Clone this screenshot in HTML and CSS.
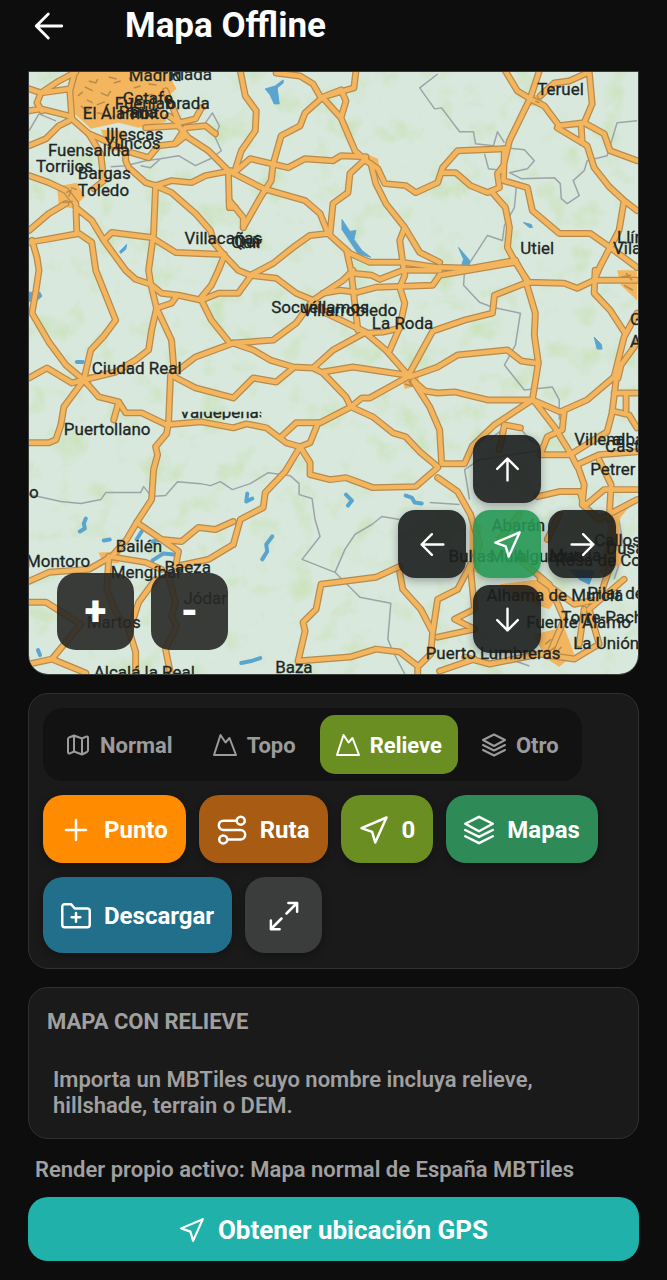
FILE: index.html
```html
<!DOCTYPE html>
<html lang="es">
<head>
<meta charset="utf-8">
<meta name="viewport" content="width=device-width, initial-scale=1">
<title>Mapa Offline</title>
<link rel="stylesheet" href="styles.css">
</head>
<body>
<svg class="sprite" aria-hidden="true">
  <symbol id="i-nav" viewBox="0 0 24 24"><path d="M22 2 2 10.500l8.500 3L13 22z"/></symbol>
  <symbol id="i-arrow" viewBox="0 0 24 24"><path d="M21 12H3M11.500 3.500 3 12l8.500 8.500"/></symbol>
  <symbol id="i-map" viewBox="0 0 24 24"><path d="M2 6a2 2 0 0 1 1-1.500L8 2.500l8 3 4-1.800q2-.7 2 1.300v12.500a2 2 0 0 1-1 1.500l-5 2.500-8-3-4 1.800q-2 .7-2-1.300zM8 2.500v16M16 5.500v16"/></symbol>
  <symbol id="i-peak" viewBox="0 0 24 24"><path d="M1 22 7.500 2l5 7.500L16.500 5 23 22z"/></symbol>
  <symbol id="i-layers" viewBox="0 0 24 24"><path d="M12 1.500 23 7l-11 6L1 7zM1 12l11 5.500L23 12M1 17l11 5.500L23 17"/></symbol>
  <symbol id="i-plus" viewBox="0 0 24 24"><path d="M12 4v16M4 12h16"/></symbol>
  <symbol id="i-route" viewBox="0 0 24 24"><circle cx="19" cy="4.500" r="3.200"/><circle cx="5" cy="19.500" r="3.200"/><path d="M15.800 4.500H5.200a3.700 3.700 0 0 0 0 7.500h13.600a3.700 3.700 0 0 1 0 7.500H8.200"/></symbol>
  <symbol id="i-folder" viewBox="0 0 24 24"><path d="M1 4.500a2 2 0 0 1 2-2h5l3 3.500h10a2 2 0 0 1 2 2v11a2 2 0 0 1-2 2H3a2 2 0 0 1-2-2zM12 9.500v7M8.500 13h7"/></symbol>
  <symbol id="i-expand" viewBox="0 0 24 24"><path d="M14 10 22 2M15.500 1.500h7v7M10 14l-8 8M1.500 15.500v7h7"/></symbol>
</svg>

<header class="topbar">
  <button class="back" type="button" aria-label="Volver"><svg class="icon"><use href="#i-arrow"/></svg></button>
  <h1 class="title">Mapa Offline</h1>
</header>

<main class="content">
  <section class="map" aria-label="Mapa">
    <svg class="map-canvas" viewBox="28 71 611 604" preserveAspectRatio="xMidYMid slice">
      <defs>
        <filter id="woods" x="0" y="0" width="100%" height="100%" color-interpolation-filters="sRGB">
          <feTurbulence type="fractalNoise" baseFrequency="0.035" numOctaves="4" seed="8"/>
          <feColorMatrix values="0 0 0 0 .80  0 0 0 0 .89  0 0 0 0 .74  3 0 0 0 -1.600"/>
        </filter>
        <clipPath id="tile"><rect x="170" y="412" width="91" height="8"/></clipPath>
        <clipPath id="tile-left"><rect x="230" y="225" width="32" height="30"/></clipPath>
        <g id="roads">
          <path d="M28 88 40 92 68 88M40 92 36 102 41 110M28 110 40 108 68 115M40 92 58 80 75 71M28 145 45 138 58 125 68 120M74 71 69 90 71 118 88 133 100 153 103 180 93 188"/>
          <path d="M125 150V160L128 167 145 182 155 185 171 180 191 182 205 175 231 170M145 127 178 125 188 137 208 150 228 170 229 207H235M201 107 195 118 178 122 168 115M175 142 185 127 205 125 215 133M131 152 148 157 158 145 175 143 185 135M88 133 100 138 125 150M165 90 178 120"/>
          <path d="M155 185 153 233 148 270 150 283 156 308 151 330 148 350 135 360 115 372 83 380M155 185 171 192 195 213 210 230 214 243 224 255 238 270 250 275"/>
          <path d="M28 175 48 182 65 190 75 203 76 233M65 203 48 213 28 230M75 207 91 220 103 240 125 270 135 279 150 284M28 242 78 233 91 242 95 270 103 290 115 320 103 336 90 350 83 380M103 240 111 232 151 237 175 252 224 254M31 240 36 257 38 270 35 290 31 313 48 342 65 365 83 380"/>
          <path d="M28 378 46 368 71 383 83 380 63 407 60 425 55 440 48 443H28M83 380 98 397 118 402 125 413H141L166 425M118 402 113 420M170 375 168 423 166 434 155 447 157 455 153 470 151 500 136 523 126 540 111 557 88 570 48 573 28 582"/>
          <path d="M156 308 171 340 174 377 195 388 233 398 253 378 276 382 293 368M150 284 161 293 178 295 201 300 218 293H238L251 275 276 278 296 293 313 300M176 296 171 303 156 308M201 297 211 285 218 270 224 255M201 300 211 320 228 341M174 373 195 357 233 343M166 425 201 422 233 428 246 424 266 428 286 443 300 447 310 463V475L330 480 346 478 373 488 416 487 438 468"/>
          <path d="M136 523 161 540 181 542 198 528 215 530 233 522M161 540 178 552 175 567 208 560 233 545M108 557 145 563 161 570M108 560 106 590 115 613 128 630 135 653V675M155 580 138 603 131 625M168 577 175 603 171 617 176 627 165 650 170 675M28 603H45L80 625 51 660 28 665M51 660 85 674"/>
          <path d="M240 70 245 95 256 110 255 130 241 150 234 172 250 158 288 167 305 158 333 160 341 155 366 156M276 72 300 75 313 83 321 97M356 70 354 87 323 96 305 112 300 125 281 135 273 163 271 180 260 197 243 227M323 97 341 117 355 150 366 160 378 168 385 183 406 185 416 192 438 182 443 167 458 150 505 148M323 96 341 89 346 100 341 117"/>
          <path d="M228 170 263 188 305 200 320 213 328 233 350 253 370 262H403L438 267 471 268 516 260M366 158 350 173 348 192 333 203 330 233M328 233 310 235 293 247 273 263 250 275M371 163 376 183 386 203 405 227 400 240 403 262 405 275 400 287 405 303 400 327 390 350M405 227 420 252 440 262M347 252 351 270 358 330M229 200 243 217V227"/>
          <path d="M506 70 518 90 531 98M540 70 531 97 510 140 504 165 498 173 500 187 488 192 471 185 456 172H443M505 148 504 180 528 187 533 210 560 233H591L611 247 638 267M493 192 506 207 510 227 508 247 516 262 528 280M531 98 545 105 560 125 585 122 593 103 590 70M541 95 555 82 570 80 588 72M558 127 588 145 595 167 610 186 625 200 638 210M582 125 583 142M585 122 605 133 611 150 638 160M625 200 620 230 611 247 601 266 595 280"/>
          <path d="M353 270 343 280 313 300 296 323 273 340 233 343 253 350 270 360 293 367 313 368 333 350 366 332 326 313 313 300M313 368 323 373 346 397 351 407 320 423H296L281 437M323 372 353 367 406 375M351 407 362 398 370 398 406 378M351 407 373 417 393 433 406 437 420 452 438 467M410 377 386 350 366 333 383 332 400 328M410 373 433 331 465 320 493 313 495 295 528 282M410 377 438 367 458 355 508 350 522 361 536 363M414 381 425 391 438 393 455 392 488 400H531M414 382 430 407 440 430 442 464 465 464 473 446 495 425 533 400"/>
          <path d="M353 273 372 275 380 279 403 270H440M323 293 340 290 357 292 376 287 433 285 440 275 516 262M318 423 310 443 300 447 285 472 265 493 263 508 240 520 233 545"/>
          <path d="M516 260 528 282 565 283 578 288 595 280H638M527 283 536 313 535 335 539 363 533 400 561 412 588 400 615 377 625 337 638 313M596 270 595 293 611 310 626 333M619 378 622 365 638 343M534 400 555 427 571 453 578 467M565 411 563 430 548 437 541 455H571L608 432 613 413 617 380M615 393H638M627 396V410M613 411 630 415 638 428M578 465 600 455 638 452"/>
          <path d="M400 567 376 578 321 585 316 610 303 623 305 632 298 662 350 658 376 650 400 653 418 667V675M400 573 403 590 421 610 433 633 431 655 418 668M433 633 438 600 458 590 471 565M438 478 458 492 471 515 480 545 471 570 475 610 455 620 475 630 438 638M538 497 560 492 581 492 585 507 605 490H638M578 465 585 485 583 505 600 520 638 500M600 460 612 485 610 520M520 515 500 540M520 560 550 585 565 620 550 655M541 580 575 605 600 600 610 570M465 658 490 665 540 655 575 660 600 645 590 610 625 580M440 672 475 660M585 610 580 645M500 450 505 425 521 428M560 515 548 540"/>
        </g>
      </defs>
      <rect class="land" x="28" y="71" width="611" height="604"/>
      <rect x="28" y="71" width="611" height="604" filter="url(#woods)"/>
      <path class="limit" d="M28 130 38 113 55 120M110 166 125 165 145 160 160 158 178 155 195 165 210 158 221 150 215 137 219 125 212 112 205 122M140 165 150 167 160 158M438 73 420 87 435 108 442 107 460 131 474 131 476 143 494 145 498 131 505 142M485 153 489 168 505 170M505 147 525 149 535 160 528 168 510 172 522 178 555 177 561 183 562 198 568 203 580 195 574 180 585 170 588 160 608 155 618 122 638 120M517 185 515 207 505 225 503 240 488 235 475 255 465 270 464 285 480 302 493 307 521 313 516 345 505 365 525 390 553 387 560 400V420M28 495 60 502 80 504 100 500 105 493 140 493 143 487 151 497 165 496 177 482 200 484 210 486 220 482 232 490 250 484 268 473 290 476 299 484V495L312 499 315 520 320 537 302 560 335 573 345 550 355 535 372 525 382 517 400 520M335 573 360 598 391 604 388 640 392 650 405 675M490 440 505 428 520 427 530 440 545 448M470 500 465 470 480 460 545 450M430 503 460 505M618 510 625 550 615 580M510 660 530 667"/>
      <path class="water" d="M265 88 275 85 283 79 283 82 277 87 279 103 274 103 270 94ZM342 219 350 231 356 230 354 239 362 250 371 257 358 253 350 241 342 229ZM459 247 470 260 470 264 462 265 464 259ZM524 222 532 224 533 227 530 227ZM595 337 602 344 603 349 598 349ZM119 251 126 244 125 249 120 253ZM28 292 39 292 41 296 35 301H28ZM570 570 595 572 590 585 580 580Z"/>
      <path class="stream" d="M76 362H82M85 519 83 524 84 529 79 532M103 541 109 540M136 540 141 532M152 542 160 540 169 544M152 561 163 554 173 555M247 494 246 502 252 499M346 495 352 501 348 506M406 496 412 498 415 503 422 504M272 537 266 545 267 552 262 560M241 664 251 662 260 659M37 651 39 656"/>
      <path class="town-area" d="M76 71H167L176 88 161 100 166 121 138 127 118 122 90 128 74 113 70 90ZM100 129 125 130 122 150 108 150ZM56 186 76 182 84 196 72 208 58 205ZM525 92 542 95 544 104 528 105ZM366 153 378 158 380 169 366 162ZM400 371 418 373 420 385 405 389ZM76 374 92 374 90 386 78 387ZM618 270H638V300L622 285ZM636 500 620 520 622 565 600 575 610 520ZM535 635 565 628 575 655 560 668 545 658ZM500 585 540 580 560 595 550 610 520 600ZM470 525 482 525 480 575 470 570ZM98 553 120 552 118 564 102 564Z"/>
      <use class="road-edge" href="#roads"/>
      <use class="road-core" href="#roads"/>
      <path class="streets" d="M88 80 95 82 97 78M84 86 92 90M100 92 107 95 110 90M113 82 120 80M108 76 116 78M125 95 118 99M86 99 92 102M133 87 140 85M128 77 133 81M146 95 152 93M148 83 156 84M77 95 82 91M80 105 86 110 90 107M96 112 102 113M150 108 156 105M96 104 104 101M108 118 114 115M65 192 70 190 68 196M62 202 72 201M70 187 76 189M405 384 412 386 409 381M622 277 632 275M625 285 634 290M627 273 633 280M546 645 552 640M556 655 562 648M550 652 556 648M536 100 540 102"/>
      <g class="places">
        <text x="128" y="80">Madrid</text><text x="169" y="79">Rlada</text>
        <text x="122" y="103">Getafe</text><text x="114" y="108">Fuenlab</text><text x="166" y="108">orada</text>
        <text x="82" y="118">El Álamo</text><text x="118" y="117">Parla</text><text x="129" y="118">Pinto</text>
        <text x="105" y="139">Illescas</text><text x="104" y="148">Yuncos</text>
        <text x="47" y="155">Fuensalida</text><text x="35" y="171">Torrijos</text><text x="77" y="178">Bargas</text><text x="77" y="195">Toledo</text>
        <text x="184" y="244">Villacañas</text>
        <g clip-path="url(#tile-left)"><text x="231" y="248">Quintanar</text><text x="234" y="247">Qui</text></g>
        <text x="538" y="94">Teruel</text><text x="521" y="254">Utiel</text>
        <text x="618" y="243">Llíria</text><text x="614" y="254">Vilamarxant</text>
        <text x="271" y="313">Socuéllamos</text><text x="302" y="316">Villarrobledo</text><text x="372" y="329">La Roda</text>
        <text x="631" y="325">Gandia</text><text x="631" y="347">Alcoi</text>
        <text x="91" y="374">Ciudad Real</text><text x="63" y="435">Puertollano</text>
        <text x="179" y="418" clip-path="url(#tile)">Valdepeñas</text>
        <text x="575" y="445">Villena</text><text x="613" y="445">alba</text><text x="606" y="452">Castalla</text><text x="591" y="475">Petrer</text>
        <text x="28" y="498">o</text><text x="115" y="553">Bailén</text><text x="25" y="568">Montoro</text><text x="110" y="579">Mengíbar</text><text x="164" y="574">Baeza</text>
        <text x="183" y="605">Jódar</text><text x="86" y="629">Martos</text><text x="93" y="679">Alcalá la Real</text><text x="275" y="674">Baza</text>
        <text x="492" y="532">Abarán</text><text x="449" y="563">Bullas</text><text x="490" y="563">Mula</text><text x="515" y="563">Alguazas</text><text x="550" y="562">Murcia</text>
        <text x="595" y="547">Callosa de</text><text x="607" y="555">Dusa</text><text x="556" y="567">Rosa de Co</text>
        <text x="487" y="602">Alhama de Murcia</text><text x="588" y="600">Pilar de la</text><text x="562" y="624">Torre-Pacheco</text><text x="527" y="629">Fuente Álamo</text><text x="574" y="650">La Unión</text><text x="426" y="660">Puerto Lumbreras</text>
      </g>
    </svg>
    <div class="zoom">
      <button type="button" aria-label="Acercar">+</button>
      <button type="button" aria-label="Alejar">-</button>
    </div>
    <div class="pad">
      <button class="up" type="button" aria-label="Arriba"><svg class="icon"><use href="#i-arrow"/></svg></button>
      <button class="left" type="button" aria-label="Izquierda"><svg class="icon"><use href="#i-arrow"/></svg></button>
      <button class="center" type="button" aria-label="Centrar"><svg class="icon"><use href="#i-nav"/></svg></button>
      <button class="right" type="button" aria-label="Derecha"><svg class="icon"><use href="#i-arrow"/></svg></button>
      <button class="down" type="button" aria-label="Abajo"><svg class="icon"><use href="#i-arrow"/></svg></button>
    </div>
  </section>

  <section class="card controls">
    <div class="tabs">
      <button class="tab" type="button"><svg class="icon"><use href="#i-map"/></svg>Normal</button>
      <button class="tab" type="button"><svg class="icon"><use href="#i-peak"/></svg>Topo</button>
      <button class="tab active" type="button" aria-pressed="true"><svg class="icon"><use href="#i-peak"/></svg>Relieve</button>
      <button class="tab" type="button"><svg class="icon"><use href="#i-layers"/></svg>Otro</button>
    </div>
    <div class="actions">
      <button class="action point" type="button"><svg class="icon"><use href="#i-plus"/></svg>Punto</button>
      <button class="action route" type="button"><svg class="icon"><use href="#i-route"/></svg>Ruta</button>
      <button class="action count" type="button"><svg class="icon"><use href="#i-nav"/></svg>0</button>
      <button class="action maps" type="button"><svg class="icon"><use href="#i-layers"/></svg>Mapas</button>
      <button class="action download" type="button"><svg class="icon"><use href="#i-folder"/></svg>Descargar</button>
      <button class="action expand" type="button" aria-label="Pantalla completa"><svg class="icon"><use href="#i-expand"/></svg></button>
    </div>
  </section>

  <section class="card info">
    <h2>MAPA CON RELIEVE</h2>
    <p>Importa un MBTiles cuyo nombre incluya relieve, hillshade, terrain o DEM.</p>
  </section>

  <p class="status">Render propio activo: Mapa normal de España MBTiles</p>
  <button class="gps" type="button"><svg class="icon"><use href="#i-nav"/></svg>Obtener ubicación GPS</button>
</main>
</body>
</html>
```
FILE: styles.css
```css
* { box-sizing: border-box; }
body { margin: 0; background: #0d0d0d; color: #fff; font-family: Roboto, sans-serif; }
h1, h2, p { margin: 0; }
button { font: inherit; color: inherit; border: 0; padding: 0; background: none; display: flex; align-items: center; justify-content: center; }
.sprite { position: absolute; width: 0; height: 0; }
.icon { width: 30px; height: 30px; flex: none; fill: none; stroke: currentColor; stroke-width: 2; stroke-linecap: round; stroke-linejoin: round; overflow: visible; }

.topbar { display: flex; align-items: center; gap: 59px; height: 71px; padding: 4px 32px 23px; }
.back .icon { width: 34px; height: 34px; }
.title { font-size: 35px; line-height: 40px; font-weight: 700; }

.content { display: flex; flex-direction: column; padding: 0 28px 19px; }

.map { position: relative; aspect-ratio: 611 / 604; overflow: hidden; border: 1px solid #3a3d3c; border-radius: 0 0 20px 20px; }
.map-canvas { display: block; width: 100%; height: 100%; }
.land { fill: #d8e8dd; }
.water { fill: #5aa5d0; stroke: #5aa5d0; stroke-width: 1; stroke-linejoin: round; }
.stream { fill: none; stroke: #5aa5d0; stroke-width: 4; stroke-linejoin: round; stroke-linecap: round; }
.limit { fill: none; stroke: #9da4a8; stroke-width: 1.500; stroke-linejoin: round; }
.town-area { fill: #f3b65f; }
.road-edge, .road-core { fill: none; stroke-linecap: round; stroke-linejoin: round; }
.road-edge { stroke: #b88a4c; stroke-width: 7; }
.road-core { stroke: #f3b65f; stroke-width: 4.500; }
.streets { fill: none; stroke: #b88a4c; stroke-width: 1.500; }
.places { fill: #202625; font-size: 17px; stroke: #202625; stroke-width: .3; }

.zoom { position: absolute; left: 28px; bottom: 24px; display: flex; gap: 17px; }
.zoom button { width: 77px; height: 77px; border-radius: 19px; background: rgba(40, 40, 39, .9); font-size: 40px; line-height: 48px; font-weight: 900; }
.pad { position: absolute; right: 22px; bottom: 21px; display: grid; grid-template: repeat(3, 68px) / repeat(3, 68px); gap: 7px; }
.pad button { border-radius: 17px; background: rgba(28, 30, 29, .9); box-shadow: 0 3px 8px rgba(0, 0, 0, .3); }
.pad .icon { width: 29px; height: 29px; }
.pad .up { grid-area: 1 / 2; }
.pad .left { grid-area: 2 / 1; }
.pad .center { grid-area: 2 / 2; background: rgba(37, 151, 83, .9); }
.pad .right { grid-area: 2 / 3; }
.pad .down { grid-area: 3 / 2; }
.up .icon { transform: rotate(90deg); }
.right .icon { transform: rotate(180deg); }
.down .icon { transform: rotate(270deg); }

.card { margin-top: 18px; border: 1px solid #303030; border-radius: 20px; background: #1a1a1a; }
.controls { padding: 14px 14px 15px; }
.tabs { display: flex; gap: 8px; width: fit-content; padding: 7px; border-radius: 20px; background: #121212; }
.tab { gap: 10px; height: 59px; padding: 1px 16px 0; border-radius: 15px; color: #9b9b9b; font-size: 22px; font-weight: 700; }
.tab .icon { width: 24px; height: 24px; }
.tab.active { background: #6b8e23; color: #fff; }
.actions { display: flex; flex-wrap: wrap; gap: 14px 13px; margin-top: 14px; }
.action { gap: 13px; min-height: 68px; padding: 2px 18px 0; border-radius: 20px; font-size: 24px; font-weight: 700; box-shadow: 0 3px 8px rgba(0, 0, 0, .3); }
.point { background: #ff8c00; }
.route { background: #a85b12; }
.count { background: #6b8e23; }
.maps { background: #2e8b57; }
.download { background: #216f8b; }
.expand { width: 77px; height: 76px; background: #3a3d3c; }
.info { padding: 21px 18px 19px; color: #a0a0a0; font-size: 22px; line-height: 26px; }
.info h2 { font-size: 22px; line-height: 26px; font-weight: 700; }
.info p { margin: 32px 6px 0; font-weight: 600; }
.status { padding: 18px 7px 14px; color: #a0a0a0; font-size: 22px; line-height: 26px; font-weight: 600; }
.gps { gap: 13px; min-height: 64px; padding-top: 2px; border-radius: 20px; background: #20b2aa; font-size: 26px; font-weight: 700; }
.gps .icon { width: 26px; height: 26px; }
```
